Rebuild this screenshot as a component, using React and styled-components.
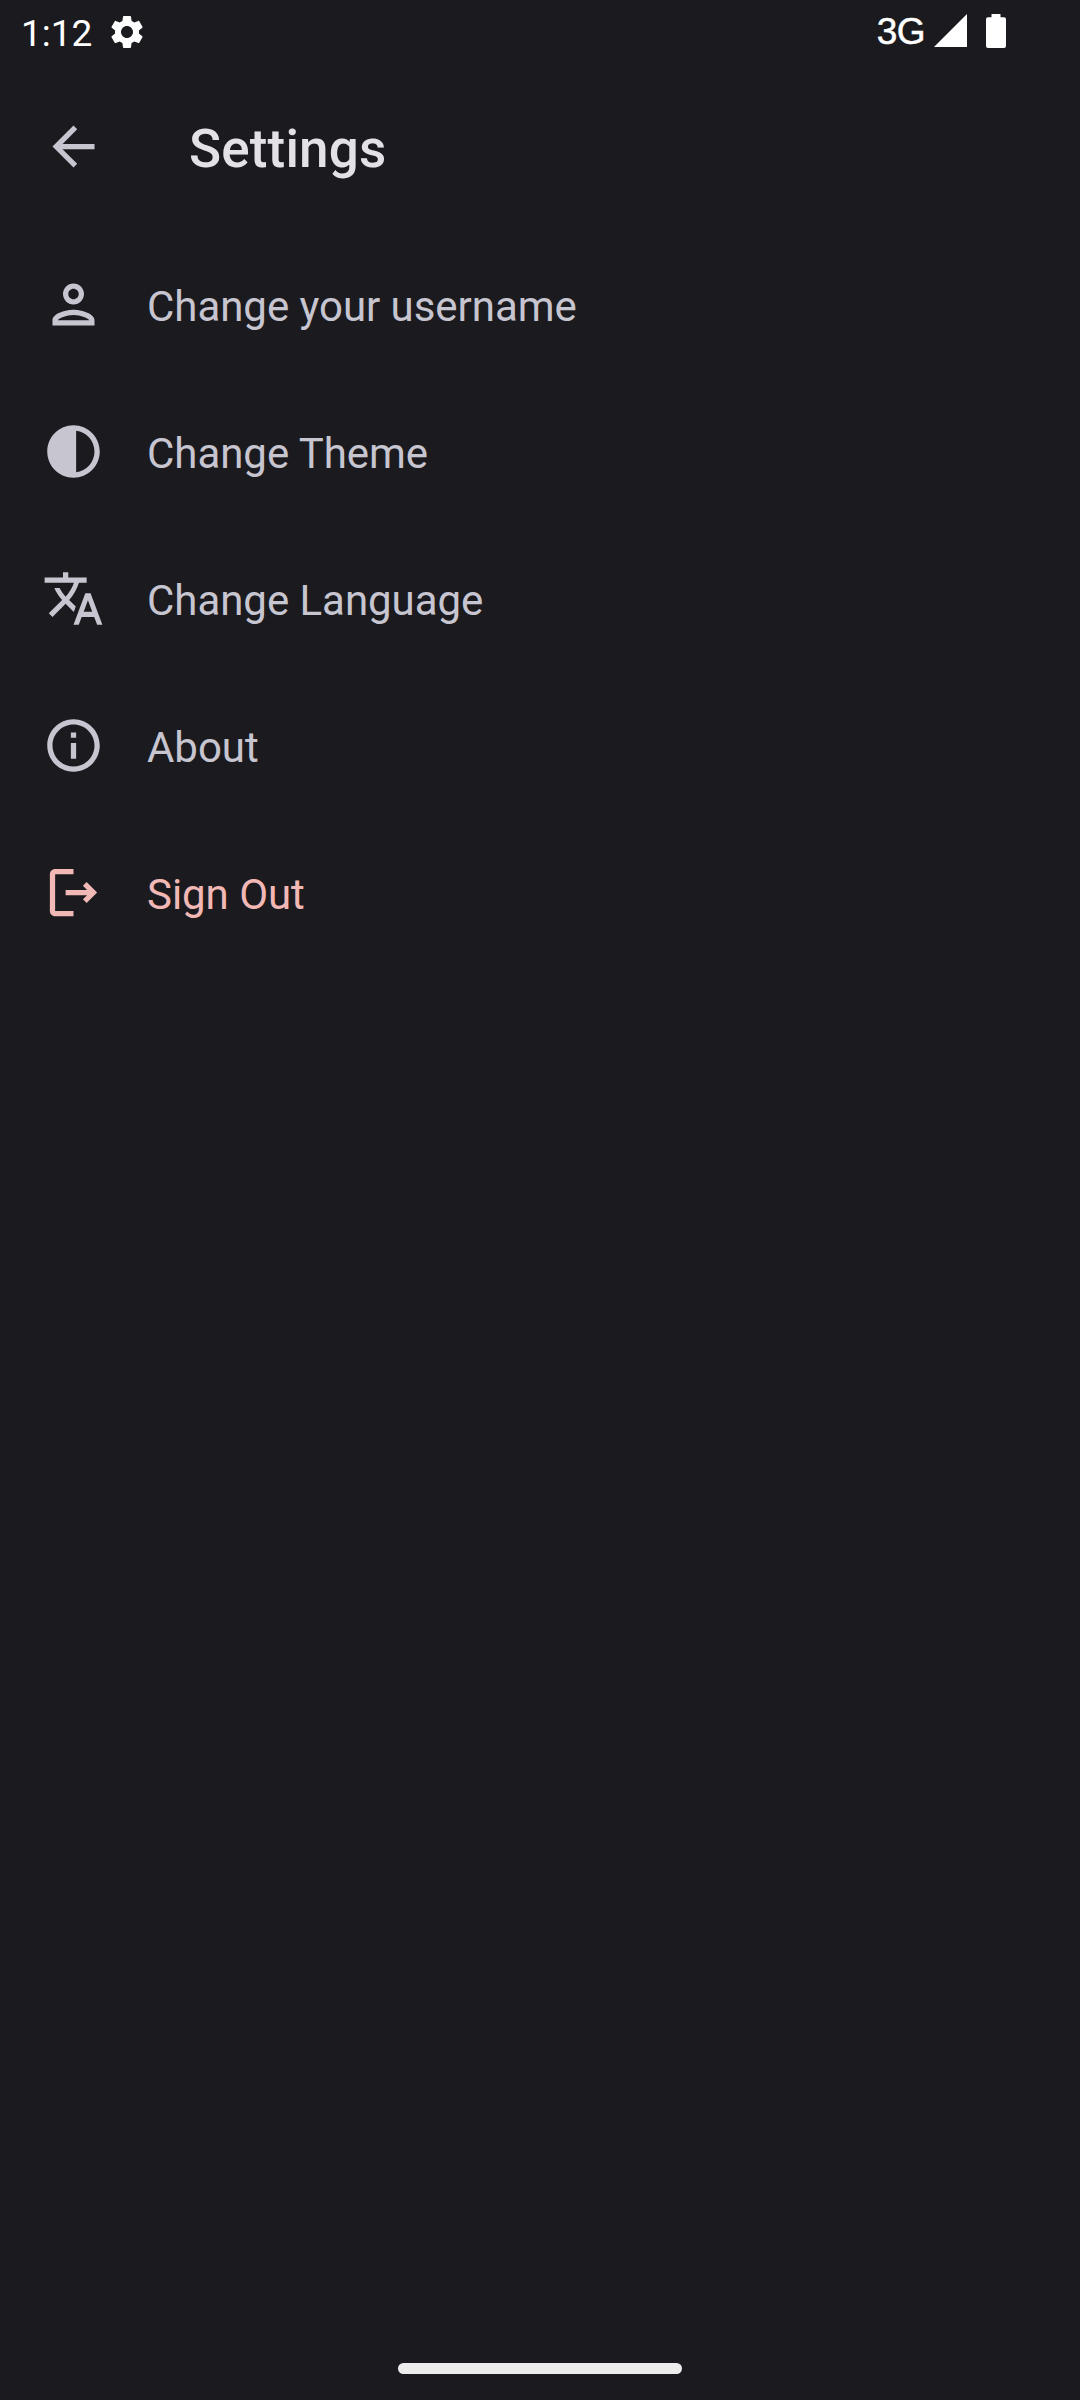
import React from "react";
import styled, { createGlobalStyle } from "styled-components";

const GlobalStyle = createGlobalStyle`
  body { margin: 0; background: #1b1b1f; }
  * { box-sizing: border-box; }
`;

const Screen = styled.div`
  display: flex;
  flex-direction: column;
  width: 1080px;
  height: 2400px;
  background: #1b1b1f;
  color: #c7c5d0;
  font-family: Roboto, "Noto Sans", sans-serif;
  overflow: hidden;
`;

const StatusBar = styled.header`
  display: flex;
  justify-content: space-between;
  height: 63px;
  padding: 0 74px 0 21px;
  color: #fff;
`;

const StatusGroup = styled.div`
  display: flex;
  align-items: flex-start;
`;

const Clock = styled.span`
  width: 86px;
  padding-top: 12px;
  font-size: 37px;
  line-height: 44px;
  white-space: nowrap;
`;

const Network = styled.span`
  padding-top: 10px;
  margin-right: 9px;
  font-family: "Liberation Sans", Arial, sans-serif;
  font-size: 37px;
  line-height: 44px;
  letter-spacing: -0.5px;
  -webkit-text-stroke: 0.5px currentColor;
`;

const Glyph = styled.svg`
  display: block;
  flex: none;
  width: ${(p) => p.$w}px;
  height: ${(p) => p.$h}px;
  margin-top: ${(p) => p.$top || 0}px;
  margin-right: ${(p) => p.$right || 0}px;
  fill: currentColor;
`;

const AppBar = styled.div`
  display: flex;
  align-items: center;
  height: 167px;
  margin-bottom: 1px;
  padding-left: 42px;
`;

const BackButton = styled.button`
  display: block;
  margin: 0 84px 0 0;
  padding: 0;
  border: 0;
  background: none;
  color: inherit;
`;

const Title = styled.h1`
  margin: 0;
  padding-top: 5px;
  color: #e4e1e6;
  font-size: 53px;
  font-weight: 500;
  line-height: 64px;
  letter-spacing: 0.15px;
`;

const List = styled.ul`
  flex: 1;
  margin: 0;
  padding: 0;
  list-style: none;
`;

const Item = styled.li`
  display: flex;
  align-items: center;
  gap: 42px;
  height: 147px;
  padding-left: 42px;
  color: ${(p) => (p.$danger ? "#f2b8b5" : "#c7c5d0")};
`;

const Label = styled.span`
  padding-top: 4px;
  font-size: 42px;
  line-height: 50px;
  letter-spacing: -0.04px;
  white-space: nowrap;
`;

const NavBar = styled.footer`
  display: flex;
  justify-content: center;
  height: 37px;
`;

const Handle = styled.div`
  width: 284px;
  height: 11px;
  border-radius: 6px;
  background: #ececec;
`;

const paths = {
  gear: "M19.14 12.94c.04-.3.06-.61.06-.94 0-.32-.02-.64-.07-.94l2.03-1.58c.18-.14.23-.41.12-.61l-1.92-3.32c-.12-.22-.37-.29-.59-.22l-2.39.96c-.5-.38-1.03-.7-1.62-.94l-.36-2.54c-.04-.24-.24-.41-.48-.41h-3.84c-.24 0-.43.17-.47.41l-.36 2.54c-.59.24-1.13.57-1.62.94l-2.39-.96c-.22-.08-.47 0-.59.22L2.74 8.87c-.12.21-.08.47.12.61l2.03 1.58c-.05.3-.09.63-.09.94s.02.64.07.94l-2.03 1.58c-.18.14-.23.41-.12.61l1.92 3.32c.12.22.37.29.59.22l2.39-.96c.5.38 1.03.7 1.62.94l.36 2.54c.05.24.24.41.48.41h3.84c.24 0 .44-.17.47-.41l.36-2.54c.59-.24 1.13-.56 1.62-.94l2.39.96c.22.08.47 0 .59-.22l1.92-3.32c.12-.22.07-.47-.12-.61l-2.01-1.58zM12 15.6c-1.98 0-3.6-1.62-3.6-3.6s1.62-3.6 3.6-3.6 3.6 1.62 3.6 3.6-1.62 3.6-3.6 3.6z",
  back: "M20 11H7.83l5.59-5.59L12 4l-8 8 8 8 1.41-1.41L7.83 13H20v-2z",
  person:
    "M12 6c1.1 0 2 .9 2 2s-.9 2-2 2-2-.9-2-2 .9-2 2-2m0 10c2.7 0 5.8 1.29 6 2H6c.23-.72 3.31-2 6-2m0-12C9.79 4 8 5.79 8 8s1.79 4 4 4 4-1.79 4-4-1.79-4-4-4zm0 10c-2.67 0-8 1.34-8 4v2h16v-2c0-2.66-5.33-4-8-4z",
  contrast:
    "M12 22c5.52 0 10-4.48 10-10S17.52 2 12 2 2 6.48 2 12s4.48 10 10 10zm1-17.93c3.94.49 7 3.85 7 7.93s-3.05 7.44-7 7.93V4.07z",
  translate:
    "M12.87 15.07l-2.54-2.51.03-.03c1.74-1.94 2.98-4.17 3.71-6.53H17V4h-7V2H8v2H1v1.99h11.17C11.5 7.92 10.44 9.75 9 11.35 8.07 10.32 7.3 9.19 6.69 8h-2c.73 1.63 1.73 3.17 2.98 4.56l-5.09 5.02L4 19l5-5 3.11 3.11.76-2.04zM18.5 10h-2L12 22h2l1.12-3h4.75L21 22h2l-4.5-12zm-2.62 7l1.62-4.33L19.12 17h-3.24z",
  info: "M11 7h2v2h-2V7zm0 4h2v6h-2v-6zm1-9C6.48 2 2 6.48 2 12s4.48 10 10 10 10-4.48 10-10S17.52 2 12 2zm0 18c-4.41 0-8-3.59-8-8s3.59-8 8-8 8 3.59 8 8-3.59 8-8 8z",
  logout:
    "M17 8l-1.41 1.41L17.17 11H9v2h8.17l-1.58 1.58L17 16l4-4-4-4zM5 5h7V3H5c-1.1 0-2 .9-2 2v14c0 1.1.9 2 2 2h7v-2H5V5z",
};

const items = [
  { icon: "person", label: "Change your username" },
  { icon: "contrast", label: "Change Theme" },
  { icon: "translate", label: "Change Language" },
  { icon: "info", label: "About" },
  { icon: "logout", label: "Sign Out", danger: true },
];

const Icon = ({ name, size = 63, top }) => (
  <Glyph viewBox="0 0 24 24" $w={size} $h={size} $top={top}>
    <path d={paths[name]} />
  </Glyph>
);

export default function App() {
  return (
    <Screen>
      <GlobalStyle />
      <StatusBar>
        <StatusGroup>
          <Clock>1:12</Clock>
          <Icon name="gear" size={40} top={12} />
        </StatusGroup>
        <StatusGroup>
          <Network>3G</Network>
          <Glyph viewBox="0 0 33 33" $w={33} $h={33} $top={14} $right={19}>
            <path d="M33 0V33H0z" />
          </Glyph>
          <Glyph viewBox="0 0 20 34" $w={20} $h={34} $top={14}>
            <path d="M5.5 0h9v3.3H18a2 2 0 0 1 2 2V32a2 2 0 0 1-2 2H2a2 2 0 0 1-2-2V5.3a2 2 0 0 1 2-2h3.5z" />
          </Glyph>
        </StatusGroup>
      </StatusBar>
      <AppBar>
        <BackButton aria-label="Back">
          <Icon name="back" />
        </BackButton>
        <Title>Settings</Title>
      </AppBar>
      <List>
        {items.map((item) => (
          <Item key={item.label} $danger={item.danger}>
            <Icon name={item.icon} />
            <Label>{item.label}</Label>
          </Item>
        ))}
      </List>
      <NavBar>
        <Handle />
      </NavBar>
    </Screen>
  );
}
